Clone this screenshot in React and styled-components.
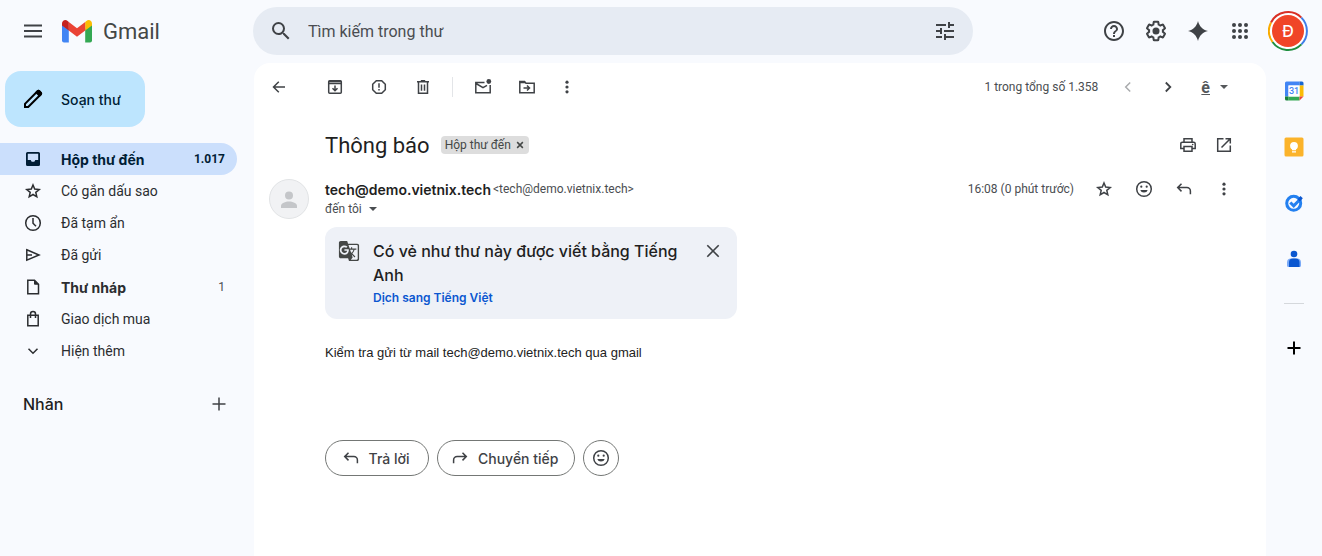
import React, { useState } from "react";
import styled, { createGlobalStyle } from "styled-components";
import { MdSearch, MdTune, MdHelpOutline, MdGTranslate } from "react-icons/md";

const GlobalStyle = createGlobalStyle`
  * {
    box-sizing: border-box;
  }

  body {
    margin: 0;
    background: #f8fafe;
    color: #1f1f1f;
    font-family: Roboto, "Open Sans", sans-serif;
    font-size: 14px;
  }

  button,
  input {
    font-family: inherit;
  }
`;

const wideFont = `Inter, Roboto, sans-serif`;

// Layout
const Header = styled.header`
  display: flex;
  align-items: center;
  height: 63px;
  padding: 0 14px 1px 0;
`;

const Brand = styled.div`
  display: flex;
  align-items: center;
  flex: 0 0 253px;
  padding-left: 13px;
`;

const Logo = styled.a`
  display: flex;
  align-items: center;
  gap: 11px;
  margin-left: 9px;
  color: #444746;
  font-size: 22px;
  text-decoration: none;
`;

const SearchForm = styled.form`
  display: flex;
  align-items: center;
  flex: 0 1 720px;
  height: 48px;
  padding: 0 8px;
  border-radius: 24px;
  background: #e6ebf3;
`;

const SearchInput = styled.input`
  flex: 1;
  min-width: 0;
  margin-left: 7px;
  padding: 0;
  border: none;
  outline: none;
  background: none;
  color: #1f1f1f;
  font-size: 16px;

  &::placeholder {
    color: #4a4d51;
    opacity: 1;
  }
`;

const HeaderActions = styled.div`
  display: flex;
  align-items: center;
  gap: 2px;
  margin-left: auto;
`;

const IconButton = styled.button`
  display: flex;
  align-items: center;
  justify-content: center;
  flex: none;
  width: ${({ $size }) => $size || 40}px;
  height: ${({ $size }) => $size || 40}px;
  padding: 0;
  border: none;
  border-radius: 50%;
  background: none;
  color: ${({ $color }) => $color || "#3f4246"};
  cursor: pointer;

  &:hover {
    background: rgba(60, 64, 67, 0.08);
  }
`;

const AccountButton = styled(IconButton)`
  margin-left: 6px;
`;

const Body = styled.div`
  display: flex;
  align-items: stretch;
  min-height: calc(100vh - 63px);
`;

const Sidebar = styled.aside`
  flex: 0 0 254px;
  padding-top: 8px;
`;

const ComposeButton = styled.button`
  display: flex;
  align-items: center;
  gap: 16px;
  height: 56px;
  margin: 0 0 16px 5px;
  padding: 0 24px 0 16px;
  border: none;
  border-radius: 16px;
  background: #bde5fe;
  color: #001d35;
  font-family: ${wideFont};
  font-size: 14px;
  font-weight: 500;
  cursor: pointer;
`;

const NavItem = styled.a`
  display: flex;
  align-items: center;
  gap: 18px;
  height: 32px;
  margin-right: 17px;
  padding: 0 12px 0 23px;
  border-radius: 0 16px 16px 0;
  background: ${({ $active }) => ($active ? "#cbdffc" : "transparent")};
  color: ${({ $active }) => ($active ? "#001d35" : "#2b2d30")};
  font-family: ${({ $bold }) => ($bold ? wideFont : "inherit")};
  font-weight: ${({ $bold }) => ($bold ? 700 : 400)};
  text-decoration: none;
`;

const NavCount = styled.span`
  margin-left: auto;
  color: ${({ $active }) => ($active ? "#001d35" : "#4a4d51")};
  font-family: Roboto, sans-serif;
  font-size: 12px;
  font-weight: ${({ $active }) => ($active ? 700 : 400)};
`;

const LabelsHeader = styled.div`
  display: flex;
  align-items: center;
  justify-content: space-between;
  margin-top: 17px;
  padding: 0 15px 0 23px;
`;

const LabelsTitle = styled.h2`
  margin: 0;
  font-family: ${wideFont};
  font-size: 16px;
  font-weight: 500;
`;

const Panel = styled.main`
  flex: 1;
  min-width: 0;
  padding: 0 22px 0 15px;
  border-radius: 16px 16px 0 0;
  background: #ffffff;
`;

const Toolbar = styled.div`
  display: flex;
  align-items: center;
  height: 48px;
`;

const ToolGroup = styled.div`
  display: flex;
  align-items: center;
  gap: ${({ $gap }) => $gap || 0}px;
  margin-left: ${({ $push }) => $push || "0"};
`;

const Divider = styled.span`
  width: 1px;
  height: 20px;
  margin: 0 10px;
  background: #e3e5e8;
`;

const Counter = styled.span`
  margin-right: 10px;
  color: #4a4d51;
  font-size: 12px;
`;

const InputTool = styled.button`
  display: flex;
  align-items: center;
  gap: 10px;
  margin: 0 10px 0 7px;
  padding: 0 6px;
  border: none;
  background: none;
  color: #55585b;
  font-size: 16px;
  font-weight: 700;
  cursor: pointer;
`;

const SubjectRow = styled.div`
  display: flex;
  align-items: center;
  height: 68px;
  padding-left: 56px;
`;

const Subject = styled.h1`
  margin: 0 11px 0 0;
  font-size: 22px;
  font-weight: 400;
`;

const Chip = styled.span`
  display: flex;
  align-items: center;
  gap: 4px;
  height: 18px;
  padding: 0 4px;
  border-radius: 4px;
  background: #dddddd;
  color: #444746;
  font-size: 12px;
`;

const ChipClose = styled.button`
  display: flex;
  padding: 0;
  border: none;
  background: none;
  color: #444746;
  cursor: pointer;
`;

const Message = styled.article`
  display: flex;
  gap: 16px;
`;

const MessageContent = styled.div`
  flex: 1;
  min-width: 0;
`;

const SenderRow = styled.div`
  display: flex;
  align-items: center;
  height: 20px;
`;

const SenderName = styled.span`
  font-family: ${wideFont};
  font-size: 14px;
  font-weight: 600;
`;

const SmallText = styled.span`
  color: #4a4d51;
  font-size: 12px;
`;

const SenderEmail = styled(SmallText)`
  margin-left: 2px;
`;

const Recipient = styled.button`
  display: flex;
  align-items: center;
  gap: 7px;
  height: 20px;
  padding: 0;
  border: none;
  background: none;
  color: #4a4d51;
  font-size: 12px;
  cursor: pointer;
`;

const TranslateCard = styled.section`
  display: flex;
  align-items: flex-start;
  max-width: 412px;
  margin-top: 8px;
  padding: 12px 12px 10px;
  border-radius: 12px;
  background: #eef1f7;
  color: #444746;
`;

const TranslateIcon = styled.span`
  display: flex;
  width: 24px;
  height: 24px;
  align-items: center;
  justify-content: center;
`;

const TranslateText = styled.div`
  flex: 1;
  margin: 0 16px 0 12px;
  color: #1f1f1f;
  font-family: ${wideFont};
  font-size: 16px;
  font-weight: 500;
  line-height: 24px;
`;

const TranslateLink = styled.a`
  display: block;
  color: #0b57d0;
  font-size: 12px;
  font-weight: 600;
  line-height: 22px;
  text-decoration: none;
`;

const MailText = styled.p`
  margin: 24px 0 0;
  color: #222222;
  font-family: "Liberation Sans", Arial, sans-serif;
  font-size: 13px;
  line-height: 20px;
`;

const ReplyRow = styled.div`
  display: flex;
  gap: 8px;
  margin-top: 77px;
`;

const ReplyButton = styled.button`
  display: flex;
  align-items: center;
  justify-content: center;
  gap: 8px;
  min-width: ${({ $round }) => ($round ? 36 : 104)}px;
  height: 36px;
  padding: ${({ $round }) => ($round ? "0" : "0 16px 0 12px")};
  border: 1px solid #747775;
  border-radius: 18px;
  background: #ffffff;
  color: #3f4246;
  font-family: ${wideFont};
  font-size: 14px;
  font-weight: 500;
  cursor: pointer;
`;

const Rail = styled.aside`
  display: flex;
  flex: 0 0 56px;
  flex-direction: column;
  align-items: center;
  gap: 16px;
  padding-top: 8px;
`;

const RailLine = styled.hr`
  width: 20px;
  margin: 8px 0;
  border: none;
  border-top: 1px solid #d5d8dc;
`;

// Icons
const Glyph = ({ size = 20, width = 1.5, children }) => (
  <svg
    width={size}
    height={size}
    viewBox="0 0 20 20"
    fill="none"
    stroke="currentColor"
    strokeWidth={width}
    aria-hidden="true"
  >
    {children}
  </svg>
);

const MenuIcon = () => (
  <Glyph width={1.8}>
    <path d="M1 4.5h18M1 10h18M1 15.5h18" />
  </Glyph>
);

const GmailLogo = () => (
  <svg width="30" height="23" viewBox="0 0 30 23" aria-hidden="true">
    <path d="M0 4v16.500a2 2 0 0 0 2 2h4.800V9L0 4z" fill="#4285f4" />
    <path d="M23.200 9v13.500H28a2 2 0 0 0 2-2V4l-6.800 5z" fill="#34a853" />
    <path d="M23.200 2.100V10.500L30 5.400V3.400C30 .500 26.600-1 24.400.900L23.200 2.100z" fill="#fbbc04" />
    <path d="M6.800 10.500V2l8.200 6.200L23.200 2v8.500L15 16.700l-8.200-6.200z" fill="#ea4335" />
    <path d="M0 3.400v2l6.800 5.100V2.100L5.600.900C3.400-1 0 .500 0 3.400z" fill="#c5221f" />
  </svg>
);

const GearIcon = () => (
  <svg width="24" height="24" viewBox="-1 -1 26 26" fill="none" stroke="currentColor" strokeWidth="2.200" aria-hidden="true">
    <path d="M19.430 12.980c.04-.32.07-.64.07-.98 0-.34-.03-.66-.07-.98l2.110-1.650c.19-.15.24-.42.12-.64l-2-3.460a.5.5 0 00-.61-.22l-2.490 1c-.52-.4-1.080-.73-1.690-.98l-.38-2.650A.488.488 0 0014 2h-4c-.25 0-.46.18-.49.42l-.38 2.650c-.61.25-1.170.59-1.690.98l-2.490-1a.566.566 0 00-.18-.03c-.17 0-.34.09-.43.25l-2 3.460c-.13.22-.07.49.12.64l2.110 1.650c-.04.32-.07.65-.07.98 0 .33.03.66.07.98l-2.110 1.650c-.19.15-.24.42-.12.64l2 3.460a.5.5 0 00.61.22l2.490-1c.52.4 1.080.73 1.690.98l.38 2.650c.03.24.24.42.49.42h4c.25 0 .46-.18.49-.42l.38-2.650c.61-.25 1.170-.59 1.690-.98l2.490 1c.06.02.12.03.18.03.17 0 .34-.09.43-.25l2-3.460c.12-.22.07-.49-.12-.64l-2.110-1.650z" />
    <circle cx="12" cy="12" r="3.800" fill="currentColor" stroke="none" />
  </svg>
);

const SparkIcon = () => (
  <Glyph>
    <path
      d="M10 0C11.300 5.300 14.700 8.700 20 10 14.700 11.300 11.300 14.700 10 20 8.700 14.700 5.300 11.300 0 10 5.300 8.700 8.700 5.300 10 0z"
      fill="currentColor"
      stroke="none"
    />
  </Glyph>
);

const AppsIcon = () => (
  <Glyph>
    {[4, 10, 16].map((y) =>
      [4, 10, 16].map((x) => (
        <circle key={`${x}-${y}`} cx={x} cy={y} r="2" fill="currentColor" stroke="none" />
      ))
    )}
  </Glyph>
);

const AccountAvatar = () => (
  <svg width="40" height="40" viewBox="0 0 40 40" aria-hidden="true">
    <circle cx="20" cy="20" r="18" fill="#ffffff" />
    <g fill="none" strokeWidth="2">
      <path d="M3 11.500A19 19 0 0 1 33.400 6.600" stroke="#d93025" />
      <path d="M33.400 6.600A19 19 0 0 1 33.400 33.400" stroke="#3f7ee8" />
      <path d="M33.400 33.400A19 19 0 0 1 4.500 31" stroke="#1e8e3e" />
      <path d="M4.500 31A19 19 0 0 1 3 11.500" stroke="#f9ab00" />
    </g>
    <circle cx="20" cy="20" r="16" fill="#f04527" />
    <text x="20" y="26" textAnchor="middle" fill="#ffffff" fontSize="16" fontWeight="500" fontFamily="Inter, Roboto, sans-serif">
      Đ
    </text>
  </svg>
);

const PencilIcon = () => (
  <svg width="24" height="24" viewBox="0 0 24 24" fill="none" stroke="#000000" strokeWidth="2" aria-hidden="true">
    <path d="M4 20v-3.200L16.500 4.300c.6-.6 1.300-.6 1.900 0l1.300 1.300c.6.6.6 1.300 0 1.900L7.200 20z" />
    <path d="M14 5.500L18.500 10l2-2c.9-.9.9-2 0-2.900L18.900 3.500c-.9-.9-2-.9-2.900 0z" fill="#000000" stroke="none" />
  </svg>
);

const InboxIcon = () => (
  <Glyph>
    <path
      fillRule="evenodd"
      d="M4.500 3h11A1.500 1.500 0 0 1 17 4.500v11a1.500 1.500 0 0 1-1.500 1.500h-11A1.500 1.500 0 0 1 3 15.500v-11A1.500 1.500 0 0 1 4.500 3zM4.800 4.800v6.200h2.900l1 1.700h2.600l1-1.700h2.900V4.800z"
      fill="currentColor"
      stroke="none"
    />
  </Glyph>
);

const StarIcon = () => (
  <Glyph width={1.5}>
    <path d="M10 4l1.700 4.100 4.500.4-3.400 2.900 1 4.400L10 13.500l-3.800 2.300 1-4.400L3.800 8.500l4.500-.4z" />
  </Glyph>
);

const ClockIcon = () => (
  <Glyph>
    <circle cx="10" cy="10" r="7.300" />
    <path d="M10 5v5.200l3 3" />
  </Glyph>
);

const SendIcon = () => (
  <Glyph>
    <path d="M3.800 4.800L16 10 3.800 15.200zM3.800 10H9" />
  </Glyph>
);

const FileIcon = () => (
  <Glyph>
    <path d="M4.800 3.200h6.700l4 4v9.600H4.800z" />
    <path d="M11.500 3.500v3.700h3.700z" fill="currentColor" strokeWidth="1" />
  </Glyph>
);

const BagIcon = () => (
  <Glyph>
    <path d="M4.800 6.200h10.400v10.600H4.800zM7.500 9V5a2.500 2.500 0 0 1 5 0v4" />
  </Glyph>
);

const ChevronDown = () => (
  <Glyph>
    <path d="M5.500 7.800L10 12.300l4.500-4.500" />
  </Glyph>
);

const PlusIcon = ({ width = 1.5 }) => (
  <Glyph width={width}>
    <path d="M10 3.500v13M3.500 10h13" />
  </Glyph>
);

const BackIcon = () => (
  <Glyph>
    <path d="M16 10H4.800M9.800 4.700L4.500 10l5.300 5.300" />
  </Glyph>
);

const ArchiveIcon = () => (
  <Glyph>
    <rect x="3.700" y="3.700" width="12.600" height="12.600" rx="1" />
    <path d="M3.700 4.500h12.600M3.700 6.500h12.600M10 8.500v5M7.500 11.200l2.500 2.500 2.500-2.500" />
  </Glyph>
);

const ReportIcon = () => (
  <Glyph>
    <path d="M7.300 3.700h5.400l3.600 3.600v5.400l-3.600 3.600H7.300l-3.600-3.600V7.300z" />
    <path d="M10 6.200v4.600M10 12v1.600" />
  </Glyph>
);

const TrashIcon = () => (
  <Glyph>
    <path d="M4 4.700h12M7.800 3.700h4.400M5.500 5v11.300h9V5M8.500 7.500v6.200M11.500 7.500v6.200" />
  </Glyph>
);

const UnreadIcon = () => (
  <Glyph>
    <path d="M11.500 5.500H2.800v10.300h14.400V8M3 6.500l7 4.200 4-2.400" />
    <circle cx="15.800" cy="4.500" r="2.400" fill="currentColor" stroke="none" />
  </Glyph>
);

const MoveIcon = () => (
  <Glyph>
    <path d="M2.800 15.700V4.500h4.700l1.500 1.700h8.200v9.500z" />
    <path d="M2.800 5.500h5.500M6.500 11h5.500M10 8.500l2.500 2.500L10 13.500" />
  </Glyph>
);

const MoreIcon = () => (
  <Glyph>
    <g fill="currentColor" stroke="none">
      <circle cx="10" cy="5.200" r="1.600" />
      <circle cx="10" cy="10" r="1.600" />
      <circle cx="10" cy="14.800" r="1.600" />
    </g>
  </Glyph>
);

const ChevronLeft = () => (
  <Glyph>
    <path d="M12.200 5.500L7.700 10l4.500 4.500" />
  </Glyph>
);

const ChevronRight = () => (
  <Glyph width={1.8}>
    <path d="M7.800 5.500l4.500 4.500-4.500 4.500" />
  </Glyph>
);

const Caret = () => (
  <svg width="8" height="4" viewBox="0 0 8 4" aria-hidden="true">
    <path d="M0 0h8L4 4z" fill="currentColor" />
  </svg>
);

const PrintIcon = () => (
  <Glyph>
    <path d="M6 7V3.700h8V7M6 13.500H2.800V8.800c0-1 .6-1.600 1.600-1.600h11.200c1 0 1.600.6 1.600 1.600v4.700H14" />
    <path d="M6 11.500h8v4.800H6z" />
    <circle cx="14.700" cy="9.500" r=".8" fill="currentColor" stroke="none" />
  </Glyph>
);

const OpenIcon = () => (
  <Glyph>
    <path d="M9.500 3.700H3.700v12.600h12.600v-5.800M11.500 3.700h4.800v4.800M16 4l-8.500 8.500" />
  </Glyph>
);

const SmileIcon = () => (
  <Glyph>
    <circle cx="10" cy="10" r="7.300" />
    <path d="M6.300 11h7.400a3.800 3.300 0 0 1-7.400 0z" fill="currentColor" stroke="none" />
    <circle cx="7.300" cy="7.700" r="1.100" fill="currentColor" stroke="none" />
    <circle cx="12.700" cy="7.700" r="1.100" fill="currentColor" stroke="none" />
  </Glyph>
);

const ReplyIcon = () => (
  <Glyph>
    <path d="M7.500 4.800L3.700 8.600l3.800 3.800M3.900 8.600h9a3.500 3.500 0 0 1 3.500 3.500v3.200" />
  </Glyph>
);

const ForwardIcon = () => (
  <Glyph>
    <path d="M12.500 4.800l3.800 3.800-3.800 3.800M16.100 8.600h-9a3.500 3.500 0 0 0-3.500 3.500v3.200" />
  </Glyph>
);

const CloseIcon = ({ size = 20, width = 1.6 }) => (
  <Glyph size={size} width={width}>
    <path d="M4.300 4.300l11.400 11.400M15.700 4.300L4.300 15.700" />
  </Glyph>
);

const PersonAvatar = () => (
  <svg width="40" height="40" viewBox="0 0 40 40" aria-hidden="true">
    <circle cx="20" cy="20" r="19.500" fill="#f1f2f4" stroke="#e1e3e5" />
    <circle cx="20" cy="16.500" r="4" fill="#c4c6c9" />
    <path d="M12 29v-2c0-3 4.500-4.500 8-4.500s8 1.500 8 4.500v2z" fill="#c4c6c9" />
  </svg>
);

const CalendarIcon = () => (
  <Glyph>
    <g stroke="none">
      <path d="M2.500 .5h13V4.500H4.500v11H1V2A1.500 1.500 0 0 1 2.500.5z" fill="#4285f4" />
      <path d="M15.500 .5H18A1.500 1.500 0 0 1 19.500 2v2.500h-4z" fill="#1967d2" />
      <path d="M15.500 4.500h4v11h-4z" fill="#fbbc04" />
      <path d="M4.500 15.500h11v4h-11z" fill="#34a853" />
      <path d="M1 15.500h3.500v4h-2A1.500 1.500 0 0 1 1 18z" fill="#188038" />
      <path d="M15.500 15.500h4l-4 4z" fill="#ea4335" />
      <path d="M4.500 4.500h11v11h-11z" fill="#ffffff" />
      <text x="10" y="13" textAnchor="middle" fill="#4285f4" fontSize="9" fontWeight="500" fontFamily="Roboto, sans-serif">
        31
      </text>
    </g>
  </Glyph>
);

const KeepIcon = () => (
  <Glyph>
    <g stroke="none">
      <rect x=".5" y=".5" width="19" height="19" rx="1.500" fill="#fbb32b" />
      <circle cx="10" cy="8.800" r="3.900" fill="#ffffff" />
      <path d="M8 11h4v2.300H8zM8 14.200h4v1.400H8z" fill="#ffffff" />
    </g>
  </Glyph>
);

const TasksIcon = () => (
  <Glyph>
    <circle cx="9.700" cy="10.300" r="7" stroke="#2380f0" strokeWidth="3" />
    <path d="M6.300 9.500l3.400 3.400 7-7.200" stroke="#2380f0" strokeWidth="3" />
    <path d="M13.500 6.300l3-3.300 2.300 2.300-3 3.200z" fill="#0b57d0" stroke="none" />
  </Glyph>
);

const ContactsIcon = () => (
  <Glyph>
    <g stroke="none">
      <circle cx="10" cy="5" r="3.300" fill="#0b57d0" />
      <path d="M3 16.500V13.500A4 4 0 0 1 7 9.500h6a4 4 0 0 1 4 4v3a1.500 1.500 0 0 1-1.500 1.500h-11A1.500 1.500 0 0 1 3 16.500z" fill="#7baaf7" />
      <path d="M5 18v-4.500a4 4 0 0 1 4-4h2.500a4 4 0 0 1 4 4V18z" fill="#0b57d0" />
    </g>
  </Glyph>
);

const folders = [
  { name: "Hộp thư đến", icon: InboxIcon, count: "1.017", active: true, bold: true },
  { name: "Có gắn dấu sao", icon: StarIcon },
  { name: "Đã tạm ẩn", icon: ClockIcon },
  { name: "Đã gửi", icon: SendIcon },
  { name: "Thư nháp", icon: FileIcon, count: "1", bold: true },
  { name: "Giao dịch mua", icon: BagIcon },
  { name: "Hiện thêm", icon: ChevronDown },
];

const apps = [
  { name: "Lịch", icon: CalendarIcon },
  { name: "Keep", icon: KeepIcon },
  { name: "Tasks", icon: TasksIcon },
  { name: "Danh bạ", icon: ContactsIcon },
];

const App = () => {
  const [query, setQuery] = useState("");
  const [showTranslate, setShowTranslate] = useState(true);

  return (
    <>
      <GlobalStyle />
      <Header>
        <Brand>
          <IconButton aria-label="Trình đơn chính">
            <MenuIcon />
          </IconButton>
          <Logo href="#inbox">
            <GmailLogo />
            Gmail
          </Logo>
        </Brand>
        <SearchForm role="search" onSubmit={(e) => e.preventDefault()}>
          <IconButton type="submit" aria-label="Tìm kiếm">
            <MdSearch size={24} />
          </IconButton>
          <SearchInput
            type="text"
            aria-label="Tìm kiếm trong thư"
            placeholder="Tìm kiếm trong thư"
            value={query}
            onChange={(e) => setQuery(e.target.value)}
          />
          <IconButton type="button" aria-label="Tùy chọn tìm kiếm">
            <MdTune size={24} />
          </IconButton>
        </SearchForm>
        <HeaderActions>
          <IconButton aria-label="Hỗ trợ">
            <MdHelpOutline size={24} />
          </IconButton>
          <IconButton aria-label="Cài đặt">
            <GearIcon />
          </IconButton>
          <IconButton aria-label="Gemini">
            <SparkIcon />
          </IconButton>
          <IconButton aria-label="Ứng dụng">
            <AppsIcon />
          </IconButton>
          <AccountButton aria-label="Tài khoản">
            <AccountAvatar />
          </AccountButton>
        </HeaderActions>
      </Header>

      <Body>
        <Sidebar>
          <ComposeButton>
            <PencilIcon />
            Soạn thư
          </ComposeButton>
          <nav>
            {folders.map(({ name, icon: FolderIcon, count, active, bold }) => (
              <NavItem key={name} href="#folder" $active={active} $bold={bold}>
                <FolderIcon />
                {name}
                {count && <NavCount $active={active}>{count}</NavCount>}
              </NavItem>
            ))}
          </nav>
          <LabelsHeader>
            <LabelsTitle>Nhãn</LabelsTitle>
            <IconButton aria-label="Tạo nhãn mới">
              <PlusIcon />
            </IconButton>
          </LabelsHeader>
        </Sidebar>

        <Panel>
          <Toolbar>
            <IconButton $size={20} aria-label="Quay lại">
              <BackIcon />
            </IconButton>
            <ToolGroup $gap={24} $push="36px">
              <IconButton $size={20} aria-label="Lưu trữ">
                <ArchiveIcon />
              </IconButton>
              <IconButton $size={20} aria-label="Báo cáo spam">
                <ReportIcon />
              </IconButton>
              <IconButton $size={20} aria-label="Xóa">
                <TrashIcon />
              </IconButton>
            </ToolGroup>
            <ToolGroup $push="9px">
              <Divider />
            </ToolGroup>
            <ToolGroup $gap={24} $push="10px">
              <IconButton $size={20} aria-label="Đánh dấu là chưa đọc">
                <UnreadIcon />
              </IconButton>
              <IconButton $size={20} aria-label="Di chuyển tới">
                <MoveIcon />
              </IconButton>
            </ToolGroup>
            <ToolGroup $push="20px">
              <IconButton $size={20} aria-label="Khác">
                <MoreIcon />
              </IconButton>
            </ToolGroup>
            <ToolGroup $push="auto">
              <Counter>1 trong tổng số 1.358</Counter>
              <IconButton $color="#a9abad" aria-label="Mới hơn">
                <ChevronLeft />
              </IconButton>
              <IconButton aria-label="Cũ hơn">
                <ChevronRight />
              </IconButton>
              <InputTool aria-label="Công cụ nhập">
                <u>ê</u>
                <Caret />
              </InputTool>
            </ToolGroup>
          </Toolbar>

          <SubjectRow>
            <Subject>Thông báo</Subject>
            <Chip>
              Hộp thư đến
              <ChipClose aria-label="Xóa nhãn">
                <CloseIcon size={10} width={3} />
              </ChipClose>
            </Chip>
            <ToolGroup $gap={6} $push="auto">
              <IconButton $size={20} aria-label="In tất cả">
                <PrintIcon />
              </IconButton>
              <IconButton aria-label="Trong cửa sổ mới">
                <OpenIcon />
              </IconButton>
            </ToolGroup>
          </SubjectRow>

          <Message>
            <PersonAvatar />
            <MessageContent>
              <SenderRow>
                <SenderName>tech@demo.vietnix.tech</SenderName>
                <SenderEmail>&lt;tech@demo.vietnix.tech&gt;</SenderEmail>
                <ToolGroup $push="auto">
                  <SmallText>16:08 (0 phút trước)</SmallText>
                  <ToolGroup $push="10px">
                    <IconButton aria-label="Gắn dấu sao">
                      <StarIcon />
                    </IconButton>
                    <IconButton aria-label="Thêm biểu tượng cảm xúc">
                      <SmileIcon />
                    </IconButton>
                    <IconButton aria-label="Trả lời">
                      <ReplyIcon />
                    </IconButton>
                    <IconButton aria-label="Tùy chọn khác">
                      <MoreIcon />
                    </IconButton>
                  </ToolGroup>
                </ToolGroup>
              </SenderRow>
              <Recipient>
                đến tôi
                <Caret />
              </Recipient>

              {showTranslate && (
                <TranslateCard>
                  <TranslateIcon>
                    <MdGTranslate size={22} />
                  </TranslateIcon>
                  <TranslateText>
                    Có vẻ như thư này được viết bằng Tiếng Anh
                    <TranslateLink href="#translate">Dịch sang Tiếng Việt</TranslateLink>
                  </TranslateText>
                  <IconButton $size={24} aria-label="Đóng" onClick={() => setShowTranslate(false)}>
                    <CloseIcon />
                  </IconButton>
                </TranslateCard>
              )}

              <MailText>Kiểm tra gửi từ mail tech@demo.vietnix.tech qua gmail</MailText>

              <ReplyRow>
                <ReplyButton>
                  <ReplyIcon />
                  Trả lời
                </ReplyButton>
                <ReplyButton>
                  <ForwardIcon />
                  Chuyển tiếp
                </ReplyButton>
                <ReplyButton $round aria-label="Thêm biểu tượng cảm xúc">
                  <SmileIcon />
                </ReplyButton>
              </ReplyRow>
            </MessageContent>
          </Message>
        </Panel>

        <Rail>
          {apps.map(({ name, icon: AppIcon }) => (
            <IconButton key={name} aria-label={name}>
              <AppIcon />
            </IconButton>
          ))}
          <RailLine />
          <IconButton $color="#000000" aria-label="Tải tiện ích bổ sung">
            <PlusIcon width={2} />
          </IconButton>
        </Rail>
      </Body>
    </>
  );
};

export default App;
